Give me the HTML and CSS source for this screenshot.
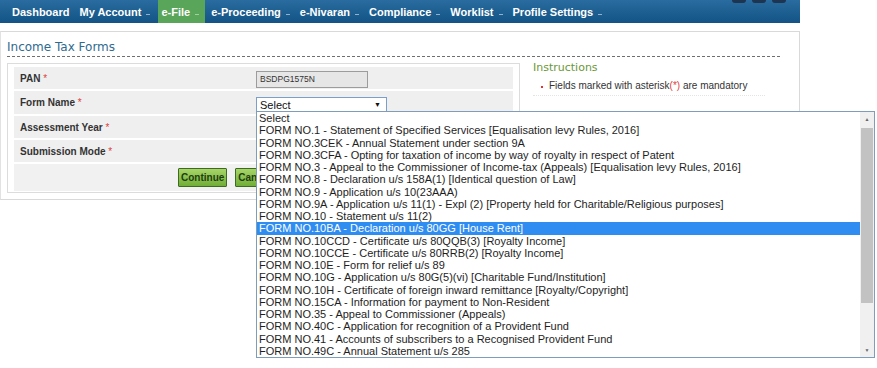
FILE: index.html
```html
<!DOCTYPE html>
<html>
<head>
<meta charset="utf-8">
<link rel="stylesheet" href="styles.css">
</head>
<body>
<div class="topnav">
  <a class="nav-item">Dashboard</a>
  <a class="nav-item">My Account <span class="caret"></span></a>
  <a class="nav-item active">e-File <span class="caret"></span></a>
  <a class="nav-item">e-Proceeding <span class="caret"></span></a>
  <a class="nav-item">e-Nivaran <span class="caret"></span></a>
  <a class="nav-item">Compliance <span class="caret"></span></a>
  <a class="nav-item">Worklist <span class="caret"></span></a>
  <a class="nav-item">Profile Settings <span class="caret"></span></a>
  <div class="nav-icons"><span></span><span></span><span></span></div>
</div>

<div class="panel">
  <div class="panel-title">Income Tax Forms</div>
  <div class="panel-body">
    <div class="form-box">
      <div class="row">
        <div class="label">PAN <span class="req">*</span></div>
        <div class="field"><div class="pan-input">BSDPG1575N</div></div>
      </div>
      <div class="row">
        <div class="label">Form Name <span class="req">*</span></div>
        <div class="field">
          <div class="select-box">Select<span class="arrow">▼</span></div>
        </div>
      </div>
      <div class="row">
        <div class="label">Assessment Year <span class="req">*</span></div>
        <div class="field"></div>
      </div>
      <div class="row">
        <div class="label">Submission Mode <span class="req">*</span></div>
        <div class="field"></div>
      </div>
      <div class="row buttons">
        <button class="btn">Continue</button>
        <button class="btn">Cancel</button>
      </div>
    </div>
    <div class="instructions">
      <div class="instr-title">Instructions</div>
      <ul class="instr-list">
        <li>Fields marked with asterisk<span class="req">(*)</span> are mandatory</li>
      </ul>
    </div>
  </div>
</div>

<div class="dropdown">
  <div class="options">
    <div class="opt">Select</div>
    <div class="opt">FORM NO.1 - Statement of Specified Services [Equalisation levy Rules, 2016]</div>
    <div class="opt">FORM NO.3CEK - Annual Statement under section 9A</div>
    <div class="opt">FORM NO.3CFA - Opting for taxation of income by way of royalty in respect of Patent</div>
    <div class="opt">FORM NO.3 - Appeal to the Commissioner of Income-tax (Appeals) [Equalisation levy Rules, 2016]</div>
    <div class="opt">FORM NO.8 - Declaration u/s 158A(1) [Identical question of Law]</div>
    <div class="opt">FORM NO.9 - Application u/s 10(23AAA)</div>
    <div class="opt">FORM NO.9A - Application u/s 11(1) - Expl (2) [Property held for Charitable/Religious purposes]</div>
    <div class="opt">FORM NO.10 - Statement u/s 11(2)</div>
    <div class="opt selected">FORM NO.10BA - Declaration u/s 80GG [House Rent]</div>
    <div class="opt">FORM NO.10CCD - Certificate u/s 80QQB(3) [Royalty Income]</div>
    <div class="opt">FORM NO.10CCE - Certificate u/s 80RRB(2) [Royalty Income]</div>
    <div class="opt">FORM NO.10E - Form for relief u/s 89</div>
    <div class="opt">FORM NO.10G - Application u/s 80G(5)(vi) [Charitable Fund/Institution]</div>
    <div class="opt">FORM NO.10H - Certificate of foreign inward remittance [Royalty/Copyright]</div>
    <div class="opt">FORM NO.15CA - Information for payment to Non-Resident</div>
    <div class="opt">FORM NO.35 - Appeal to Commissioner (Appeals)</div>
    <div class="opt">FORM NO.40C - Application for recognition of a Provident Fund</div>
    <div class="opt">FORM NO.41 - Accounts of subscribers to a Recognised Provident Fund</div>
    <div class="opt">FORM NO.49C - Annual Statement u/s 285</div>
  </div>
  <div class="scrollbar">
    <div class="sb-arrow up">▲</div>
    <div class="sb-track"><div class="sb-thumb"></div></div>
    <div class="sb-arrow down">▼</div>
  </div>
</div>
</body>
</html>
```
FILE: styles.css
```css
html, body {
  margin: 0;
  padding: 0;
  background: #ffffff;
  font-family: "Liberation Sans", Arial, sans-serif;
  color: #333;
}

.topnav {
  position: relative;
  width: 800px;
  height: 23px;
  background: linear-gradient(#2a6c9f, #135385);
  display: flex;
  align-items: stretch;
  padding-left: 8px;
  box-sizing: border-box;
}

.nav-item {
  display: flex;
  align-items: center;
  padding: 0 4px;
  margin-right: 2px;
  color: #ffffff;
  font-size: 11px;
  font-weight: bold;
  white-space: nowrap;
}

.nav-item.active {
  background: #59a55a;
  padding: 0 6px 0 3px;
  margin-left: 2px;
}

.caret {
  display: inline-block;
  width: 4px;
  height: 1px;
  background: #8fb3cf;
  margin-left: 5px;
  margin-top: 5px;
}

.active .caret {
  background: #9fd09f;
}

.nav-icons {
  position: absolute;
  left: 732px;
  top: 0;
  display: flex;
  gap: 6px;
}

.nav-icons span {
  width: 14px;
  height: 3px;
  background: #1d3550;
  border-radius: 0 0 4px 4px;
}

.panel {
  margin-top: 8px;
  width: 800px;
  height: 169px;
  box-sizing: border-box;
  border: 1px solid #d9d9d9;
  border-left-color: #e2e2e2;
  padding: 9px 0 0 6px;
}

.panel-title {
  font-family: "DejaVu Sans", "Liberation Sans", sans-serif;
  font-size: 12px;
  color: #2f6a8f;
  width: 773px;
  padding-bottom: 2px;
  border-bottom: 1px dashed #6f6f6f;
  line-height: 13px;
}

.panel-body {
  display: flex;
  margin-top: 6px;
}

.form-box {
  width: 513px;
  border: 1px solid #dcdcdc;
  box-sizing: border-box;
  padding: 3px 6px 1px 6px;
  display: flex;
  flex-direction: column;
  gap: 2px;
}

.row {
  display: flex;
  align-items: center;
  height: 22px;
  background: #efefef;
}

.row:nth-child(2) {
  height: 23px;
}

.label {
  width: 236px;
  padding-left: 6px;
  font-size: 10px;
  font-weight: bold;
  color: #333;
}

.req {
  color: #e0403a;
  font-weight: normal;
}

.field {
  display: flex;
  align-items: center;
}

.pan-input {
  width: 112px;
  height: 17px;
  box-sizing: border-box;
  margin-top: 3px;
  background: #e6e6e6;
  border: 1px solid #9c9c9c;
  font-size: 8.5px;
  line-height: 15px;
  padding-left: 3px;
  color: #333;
}

.select-box {
  width: 131px;
  height: 16px;
  box-sizing: border-box;
  margin-top: 4px;
  border: 1px solid #7a9fc8;
  background: #fff;
  font-size: 11px;
  line-height: 14px;
  padding-left: 3px;
  color: #111;
  position: relative;
}

.select-box .arrow {
  position: absolute;
  right: 5px;
  top: 0;
  font-size: 7px;
}

.row.buttons {
  height: 27px;
  background: #f1f1f1;
  justify-content: flex-start;
  padding-left: 164px;
  gap: 8px;
}

.btn {
  height: 19px;
  padding: 0 2px;
  border: 1px solid #3d6b22;
  background: linear-gradient(#a7d567, #6fae37);
  font-family: "Liberation Sans", Arial, sans-serif;
  font-size: 10px;
  font-weight: bold;
  color: #1f3d10;
  border-radius: 1px;
}

.instructions {
  margin-left: 13px;
  width: 232px;
}

.instr-title {
  font-family: "DejaVu Sans", "Liberation Sans", sans-serif;
  font-size: 11px;
  color: #6a9836;
  line-height: 12px;
  margin-top: -1px;
}

.instr-list {
  margin: 6px 0 0 0;
  padding: 0 0 4px 0;
  list-style: none;
  border-bottom: 1px dotted #e4e4e4;
}

.instr-list li {
  font-size: 10px;
  color: #333;
  padding-left: 16px;
  position: relative;
}

.instr-list li::before {
  content: "";
  position: absolute;
  left: 8px;
  top: 6px;
  width: 2px;
  height: 2px;
  background: #d33;
}

.dropdown {
  position: absolute;
  left: 256px;
  top: 111px;
  width: 619px;
  height: 247px;
  box-sizing: border-box;
  border: 1px solid #7f9db9;
  background: #fff;
  display: flex;
}

.options {
  flex: 1;
  padding-top: 0;
}

.opt {
  font-size: 11px;
  line-height: 12.25px;
  height: 12.25px;
  padding-left: 2px;
  color: #1e1e1e;
  white-space: nowrap;
  overflow: hidden;
}

.opt.selected {
  background: #2f8df2;
  color: #fff;
}

.scrollbar {
  width: 14px;
  background: #f0f0f0;
  display: flex;
  flex-direction: column;
}

.sb-arrow {
  height: 14px;
  font-size: 5px;
  color: #666;
  text-align: center;
  line-height: 14px;
}

.sb-track {
  flex: 1;
  position: relative;
}

.sb-thumb {
  position: absolute;
  left: 1px;
  right: 1px;
  top: 2px;
  height: 175px;
  background: #c2c2c2;
}
```
